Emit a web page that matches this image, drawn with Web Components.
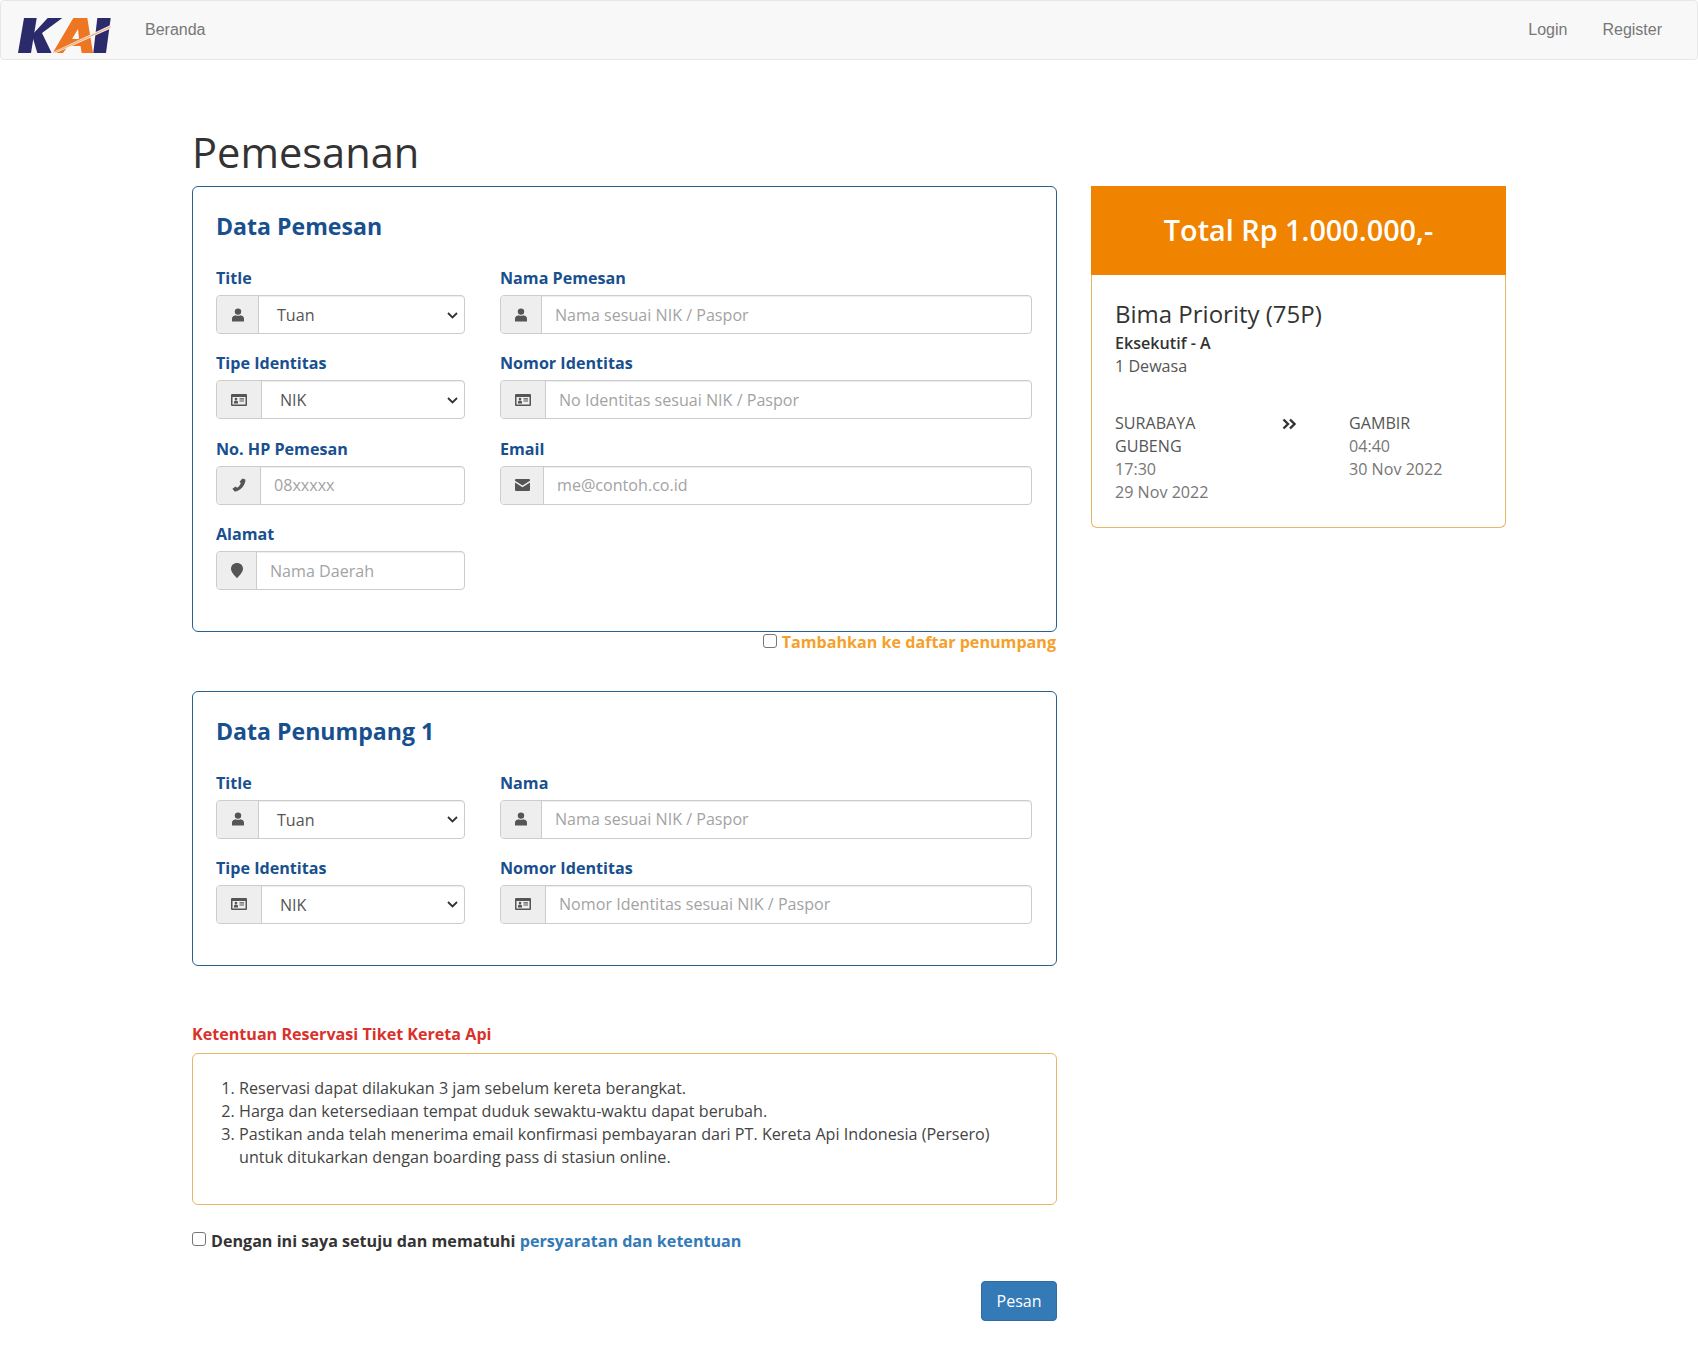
<!DOCTYPE html>
<html lang="id">
<head>
<meta charset="utf-8">
<title>Pemesanan</title>
<style>
  html, body { margin: 0; padding: 0; background: #fff; }
  body { font-family: "Open Sans", sans-serif; color: #333; }
</style>
</head>
<body>
<template id="icons">
  <svg data-icon="user" viewBox="0 0 14 14"><circle cx="7" cy="3.6" r="3.2"/><path d="M1 13.4V10.6C1 8.6 2.8 7.6 4.6 7.2 5.4 8 8.6 8 9.4 7.2 11.2 7.6 13 8.6 13 10.6V13.4Z"/></svg>
  <svg data-icon="card" viewBox="0 0 16 12"><path fill-rule="evenodd" d="M1 0H15A1 1 0 0 1 16 1V11A1 1 0 0 1 15 12H1A1 1 0 0 1 0 11V1A1 1 0 0 1 1 0ZM1.5 3V10.5H14.5V3ZM3 8.2C3 7.2 3.7 6.8 5 6.8S7 7.2 7 8.2V9.4H3ZM5 3.8A1.3 1.3 0 1 1 5 6.4 1.3 1.3 0 0 1 5 3.8ZM8.5 4.2H13V5.4H8.5ZM8.5 6.4H13V7.6H8.5Z"/></svg>
  <svg data-icon="phone" viewBox="0 0 14 14"><path d="M10.4.4 13.4 1.6C13.8 6.8 8 13.8 2.6 13.6L.4 10.8 3.6 8.6 5 9.8C6.8 8.8 8.4 6.8 8.8 5L7.6 3.8Z"/></svg>
  <svg data-icon="mail" viewBox="0 0 15 12"><path d="M1 0H14A1 1 0 0 1 15 1V1.8L7.5 6.4 0 1.8V1A1 1 0 0 1 1 0Z"/><path d="M0 3.6 7.5 8.2 15 3.6V11A1 1 0 0 1 14 12H1A1 1 0 0 1 0 11Z"/></svg>
  <svg data-icon="pin" viewBox="0 0 11 14"><path d="M5.5 0C8.6 0 11 2.2 11 5.2 11 8.4 7.4 11.6 5.5 14 3.6 11.6 0 8.4 0 5.2 0 2.2 2.4 0 5.5 0Z"/></svg>
</template>

<template id="kai-navbar-tpl">
  <style>
    :host { display: block; }
    nav {
      display: flex; align-items: center; height: 58px; box-sizing: content-box;
      background: #f8f8f8; border: 1px solid #e7e7e7; border-radius: 4px;
      font-family: "Liberation Sans", Arial, sans-serif; font-size: 16px; color: #777;
    }
    svg { display: block; width: 93px; height: 35px; margin-left: 17px; margin-top: 11px; }
    .home { margin-left: 34px; }
    .right { margin-left: auto; display: flex; gap: 35px; padding-right: 35px; }
  </style>
  <nav>
    <svg viewBox="0 0 93 35" aria-label="KAI">
      <path fill="#2b2a6b" d="M6 0H18.7L13 35H0Z"/>
      <path fill="#2b2a6b" d="M29.7 0H44.3L24 15 33.7 35H19.3L14 17Z"/>
      <path fill="#ee7623" fill-rule="evenodd" d="M55.3 0H69.3L75 35H63.7L62.5 28H50L45 35H34.7ZM60 11 54 21H61Z"/>
      <path fill="#2b2a6b" d="M79.3 0H92.7L88 35H75.3Z"/>
      <path fill="#f8f8f8" d="M33 35 92.7 7V10.6L38 35Z"/>
      <path fill="#f6b183" d="M34.5 34.6 92.7 8V9.4L38 34.6Z"/>
    </svg>
    <span class="home">Beranda</span>
    <div class="right"><span>Login</span><span>Register</span></div>
  </nav>
</template>

<template id="kai-panel-tpl">
  <style>
    :host { display: block; box-sizing: border-box; border: 1px solid #286090; border-radius: 6px; padding: 23px 24px 41px 23px; background: #fff; }
    h2 { margin: 0 0 24px; font-size: 23.1px; line-height: 33px; font-weight: 700; color: #18508f; }
    .grid { display: grid; grid-template-columns: 249px 1fr; column-gap: 35px; row-gap: 18.4px; }
  </style>
  <h2></h2>
  <div class="grid"><slot></slot></div>
</template>

<template id="kai-field-tpl">
  <style>
    :host { display: block; }
    label { display: block; font-size: 16.13px; font-weight: 700; line-height: 22px; color: #18508f; margin-bottom: 6px; }
    .group { display: flex; height: 37px; box-sizing: content-box; border: 1px solid #ccc; border-radius: 4px; box-shadow: inset 0 1px 1px rgba(0,0,0,.075); overflow: hidden; background: #fff; }
    .addon { flex: none; display: flex; align-items: center; justify-content: center; background: #eee; border-right: 1px solid #ccc; box-sizing: border-box; }
    .addon svg { fill: #555; display: block; }
    .text { flex: 1; display: flex; align-items: center; font-size: 16.1px; color: #a3a3a3; padding-left: 13px; white-space: nowrap; }
    .select { color: #555; padding-left: 18px; padding-top: 1px; }
    .select svg { margin-left: auto; margin-right: 6px; width: 11px; height: 7px; }
  </style>
  <label></label>
  <div class="group"><div class="addon"></div><div class="text"></div></div>
</template>

<template id="kai-check-tpl">
  <style>
    :host { display: flex; align-items: center; font-weight: 700; font-size: 16.13px; line-height: 22px; }
    i { flex: none; box-sizing: border-box; width: 14px; height: 14px; border: 1px solid #767676; border-radius: 3px; background: #fff; margin: -3px 5px 0 0; }
  </style>
  <i></i><span><slot></slot></span>
</template>

<template id="kai-summary-tpl">
  <style>
    :host { display: block; box-sizing: border-box; border: 1px solid #e9b666; border-top: 0; border-radius: 0 0 6px 6px; background: #fff; }
    header { margin: 0 -1px; height: 87px; padding-bottom: 2px; display: flex; align-items: center; justify-content: center; background: #f08300; color: #fff; font-size: 28.8px; font-weight: 600; }
    .body { padding: 23px 24px 23px 23px; font-size: 16.13px; line-height: 23px; }
    h3 { margin: 0 0 2px; font-size: 24px; line-height: 32px; font-weight: 500; color: #333; }
    .cls { font-weight: 600; color: #333; }
    .pax { color: #555; }
    .route { display: grid; grid-template-columns: 167px 67px 1fr; margin-top: 34px; color: #555; }
    .route .muted { color: #777; }
    .arrow { padding-top: 6px; }
    .arrow svg { display: block; width: 14px; height: 12px; fill: none; stroke: #333; stroke-width: 2.4; }
  </style>
  <header>Total Rp 1.000.000,-</header>
  <div class="body">
    <h3>Bima Priority (75P)</h3>
    <div class="cls">Eksekutif - A</div>
    <div class="pax">1 Dewasa</div>
    <div class="route">
      <div>SURABAYA<br>GUBENG<br><span class="muted">17:30<br>29 Nov 2022</span></div>
      <div class="arrow"><svg viewBox="0 0 14 12"><path d="M1.5 1.5 6 6 1.5 10.5M8 1.5 12.5 6 8 10.5"/></svg></div>
      <div>GAMBIR<br><span class="muted">04:40<br>30 Nov 2022</span></div>
    </div>
  </div>
</template>

<template id="kai-terms-tpl">
  <style>
    :host { display: block; }
    h4 { margin: 0 0 8px; font-size: 16.13px; line-height: 22px; font-weight: 700; color: #d9312b; }
    .box { box-sizing: border-box; height: 152px; border: 1px solid #e9b666; border-radius: 6px; padding: 23px 60px 23px 24px; font-size: 16.15px; line-height: 23px; color: #444; }
    ol { margin: 0; padding-left: 22px; }
  </style>
  <h4>Ketentuan Reservasi Tiket Kereta Api</h4>
  <div class="box"><ol><slot></slot></ol></div>
</template>

<script>
  const tpl = id => document.getElementById(id).content.cloneNode(true);
  const iconOf = name => document.getElementById('icons').content
    .querySelector(`[data-icon="${name}"]`).cloneNode(true);

  function shadow(el, id) {
    el.attachShadow({ mode: 'open' }).appendChild(tpl(id));
    return el.shadowRoot;
  }

  class KaiNavbar extends HTMLElement {
    constructor() { super(); shadow(this, 'kai-navbar-tpl'); }
  }

  class KaiPanel extends HTMLElement {
    constructor() { super(); shadow(this, 'kai-panel-tpl'); }
    connectedCallback() {
      this.shadowRoot.querySelector('h2').textContent = this.getAttribute('heading');
    }
  }

  class KaiField extends HTMLElement {
    constructor() { super(); shadow(this, 'kai-field-tpl'); }
    connectedCallback() {
      const root = this.shadowRoot;
      root.querySelector('label').textContent = this.getAttribute('label');
      const addon = root.querySelector('.addon');
      addon.style.width = this.getAttribute('addon') + 'px';
      const svg = iconOf(this.getAttribute('icon'));
      svg.style.width = (this.getAttribute('icon-size') || 14) + 'px';
      addon.appendChild(svg);

      const text = root.querySelector('.text');
      if (this.hasAttribute('value')) {
        text.classList.add('select');
        text.innerHTML = `<span>${this.getAttribute('value')}</span>
          <svg viewBox="0 0 11 7" fill="none" stroke="#333" stroke-width="1.8"><path d="M1 1 5.5 5.5 10 1"/></svg>`;
      } else {
        text.textContent = this.getAttribute('placeholder');
      }
    }
  }

  class KaiCheck extends HTMLElement {
    constructor() { super(); shadow(this, 'kai-check-tpl'); }
  }

  class KaiSummary extends HTMLElement {
    constructor() { super(); shadow(this, 'kai-summary-tpl'); }
  }

  class KaiTerms extends HTMLElement {
    constructor() { super(); shadow(this, 'kai-terms-tpl'); }
  }

  class KaiBooking extends HTMLElement {
    constructor() {
      super();
      this.attachShadow({ mode: 'open' }).innerHTML = `
        <style>
          :host { display: block; padding: 0 192px 0 192px; }
          h1 { margin: 0; padding-top: 66px; height: 60px; font-size: 41.6px; line-height: 53px; font-weight: 400; color: #333; box-sizing: content-box; }
          .cols { display: grid; grid-template-columns: 865px 415px; column-gap: 34px; align-items: start; }
          .main { display: flex; flex-direction: column; }
        </style>
        <h1>Pemesanan</h1>
        <div class="cols">
          <div class="main"><slot></slot></div>
          <slot name="side"></slot>
        </div>`;
    }
  }

  class KaiButton extends HTMLElement {
    constructor() {
      super();
      this.attachShadow({ mode: 'open' }).innerHTML = `
        <style>
          :host { display: inline-flex; align-items: center; justify-content: center; box-sizing: border-box; width: 76px; height: 40px; background: #337ab7; border: 1px solid #2e6da4; border-radius: 4px; color: #fff; font-size: 16px; }
        </style>
        <slot></slot>`;
    }
  }

  customElements.define('kai-navbar', KaiNavbar);
  customElements.define('kai-panel', KaiPanel);
  customElements.define('kai-field', KaiField);
  customElements.define('kai-check', KaiCheck);
  customElements.define('kai-summary', KaiSummary);
  customElements.define('kai-terms', KaiTerms);
  customElements.define('kai-booking', KaiBooking);
  customElements.define('kai-button', KaiButton);
</script>

<kai-navbar></kai-navbar>
<kai-booking>
  <kai-panel heading="Data Pemesan">
    <kai-field label="Title" icon="user" addon="42" value="Tuan"></kai-field>
    <kai-field label="Nama Pemesan" icon="user" addon="41" placeholder="Nama sesuai NIK / Paspor"></kai-field>
    <kai-field label="Tipe Identitas" icon="card" icon-size="16" addon="45" value="NIK"></kai-field>
    <kai-field label="Nomor Identitas" icon="card" icon-size="16" addon="45" placeholder="No Identitas sesuai NIK / Paspor"></kai-field>
    <kai-field label="No. HP Pemesan" icon="phone" addon="44" placeholder="08xxxxx"></kai-field>
    <kai-field label="Email" icon="mail" icon-size="15" addon="43" placeholder="me@contoh.co.id"></kai-field>
    <kai-field label="Alamat" icon="pin" icon-size="12" addon="40" placeholder="Nama Daerah"></kai-field>
  </kai-panel>
  <kai-check style="justify-content:flex-end;color:#f5a02b;margin-top:-1px;padding-right:1px"><span>Tambahkan ke daftar penumpang</span></kai-check>
  <kai-panel heading="Data Penumpang 1" style="margin-top:37.4px">
    <kai-field label="Title" icon="user" addon="42" value="Tuan"></kai-field>
    <kai-field label="Nama" icon="user" addon="41" placeholder="Nama sesuai NIK / Paspor"></kai-field>
    <kai-field label="Tipe Identitas" icon="card" icon-size="16" addon="45" value="NIK"></kai-field>
    <kai-field label="Nomor Identitas" icon="card" icon-size="16" addon="45" placeholder="Nomor Identitas sesuai NIK / Paspor"></kai-field>
  </kai-panel>
  <kai-terms style="margin-top:56.8px">
    <li>Reservasi dapat dilakukan 3 jam sebelum kereta berangkat.</li>
    <li>Harga dan ketersediaan tempat duduk sewaktu-waktu dapat berubah.</li>
    <li>Pastikan anda telah menerima email konfirmasi pembayaran dari PT. Kereta Api Indonesia (Persero) untuk ditukarkan dengan boarding pass di stasiun online.</li>
  </kai-terms>
  <kai-check style="margin-top:25px;color:#333">Dengan ini saya setuju dan mematuhi&nbsp;<span style="color:#337ab7">persyaratan dan ketentuan</span></kai-check>
  <div style="display:flex;justify-content:flex-end;margin:29px 0 30px"><kai-button>Pesan</kai-button></div>
  <kai-summary slot="side"></kai-summary>
</kai-booking>
</body>
</html>
